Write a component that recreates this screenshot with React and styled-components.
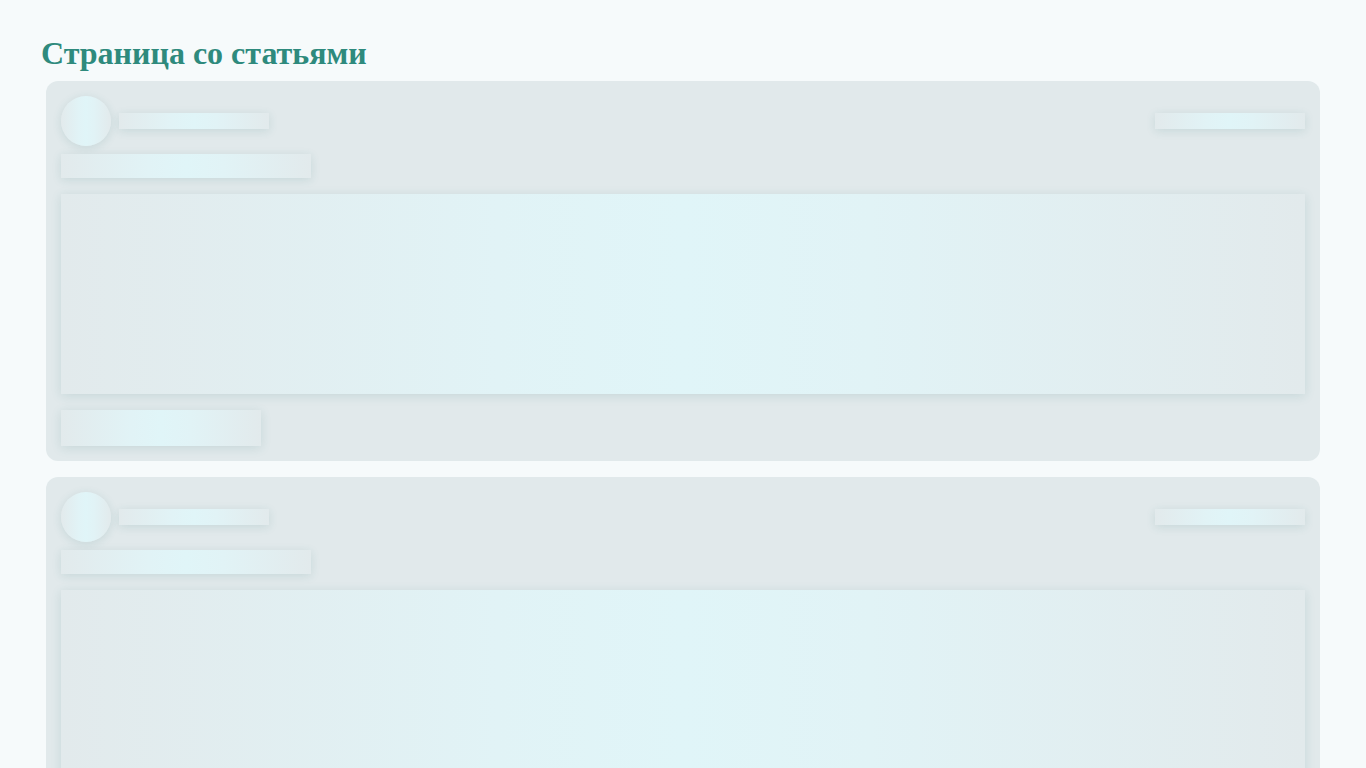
import React from "react";
import styled, { createGlobalStyle } from "styled-components";

const Global = createGlobalStyle`
  html, body { margin: 0; padding: 0; background: #f6fafb; }
  body { font-family: "Liberation Serif", "Times New Roman", serif; }
`;

const Page = styled.div`
  padding: 36px 46px 0 46px;
  display: flex;
  flex-direction: column;
  gap: 16px;
`;

const Title = styled.h1`
  margin: 0 0 -5px -5px;
  font-family: "Liberation Serif", "Times New Roman", serif;
  font-size: 32px;
  font-weight: 700;
  line-height: 34px;
  color: #2e8a7d;
`;

const Card = styled.div`
  background: #e1e9eb;
  border-radius: 12px;
  padding: 15px;
  display: flex;
  flex-direction: column;
`;

const Header = styled.div`
  display: flex;
  align-items: center;
  justify-content: space-between;
`;

const Author = styled.div`
  display: flex;
  align-items: center;
  gap: 8px;
`;

const Skeleton = styled.div`
  background: linear-gradient(
    90deg,
    #e2eaec 0%,
    #e1f3f6 35%,
    #e0f5f8 50%,
    #e1f3f6 65%,
    #e2eaec 100%
  );
  box-shadow: 0 2px 10px rgba(40, 110, 115, 0.14);
  width: ${(p) => p.$w};
  height: ${(p) => p.$h}px;
  margin-top: ${(p) => p.$mt || 0}px;
  border-radius: ${(p) => (p.$round ? "50%" : "0")};
  flex-shrink: 0;
`;

function ArticleSkeleton() {
  return (
    <Card>
      <Header>
        <Author>
          <Skeleton $w="50px" $h={50} $round />
          <Skeleton $w="150px" $h={16} />
        </Author>
        <Skeleton $w="150px" $h={16} />
      </Header>
      <Skeleton $w="250px" $h={24} $mt={8} />
      <Skeleton $w="100%" $h={200} $mt={16} />
      <Skeleton $w="200px" $h={36} $mt={16} />
    </Card>
  );
}

export default function App() {
  return (
    <>
      <Global />
      <Page>
        <Title>Страница со статьями</Title>
        <ArticleSkeleton />
        <ArticleSkeleton />
        <ArticleSkeleton />
      </Page>
    </>
  );
}
